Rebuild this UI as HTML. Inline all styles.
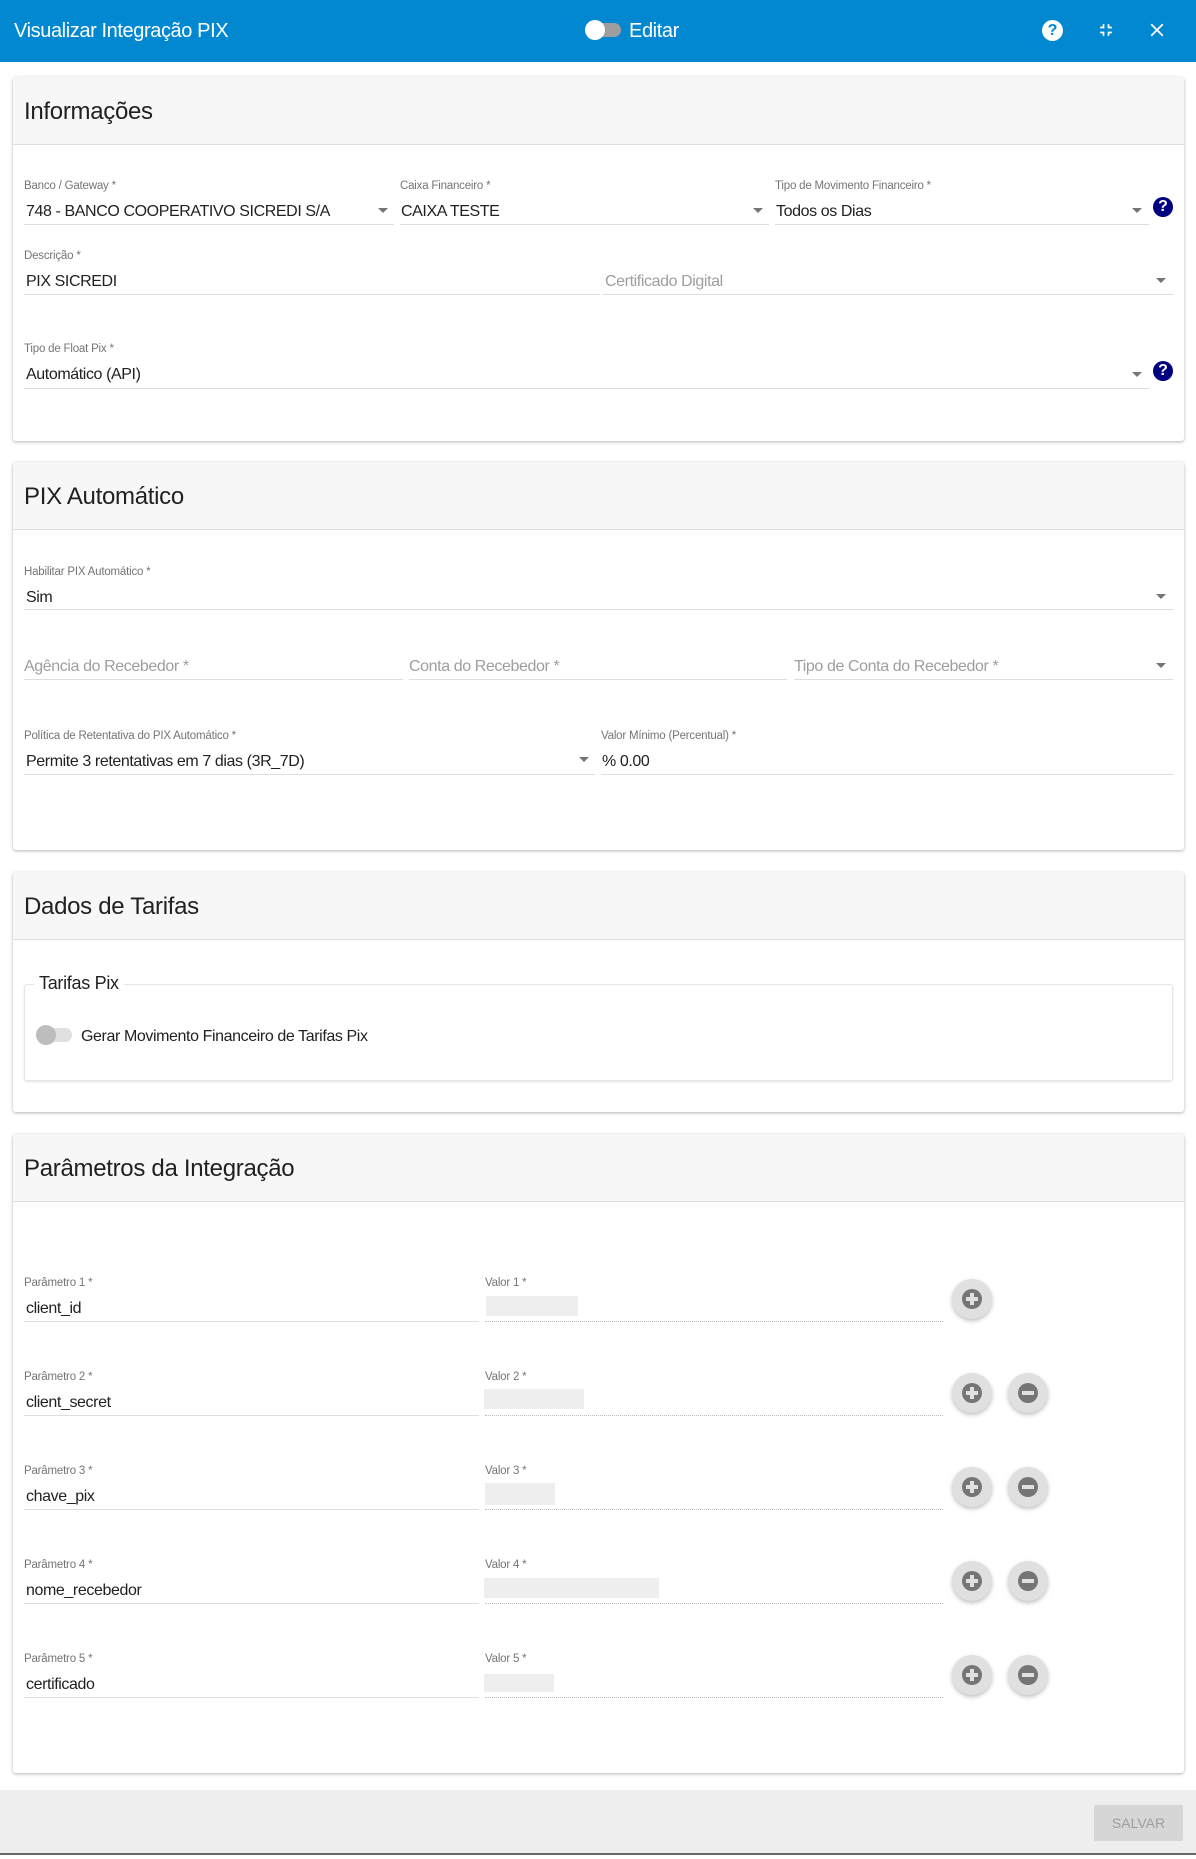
<!DOCTYPE html>
<html><head><meta charset="utf-8"><style>
*{box-sizing:border-box;margin:0;padding:0}
body{width:1196px;height:1859px;position:relative;background:#fff;font-family:"Liberation Sans",sans-serif;color:#212121;overflow:hidden}
.a{position:absolute}
.hdr{left:0;top:0;width:1196px;height:62px;background:#0288d1;color:#fff}
.card{left:13px;width:1171px;background:#fff;border-radius:3px;box-shadow:0 1px 3px rgba(0,0,0,.3)}
.ch{left:0;top:0;width:100%;height:68px;background:#f7f7f7;border-bottom:1px solid #ddd;font-size:24px;padding:21px 0 0 11px;border-radius:3px 3px 0 0;letter-spacing:-0.3px}
.lbl{font-size:11.5px;color:#757575;margin-top:2px;letter-spacing:-0.2px}
.val{font-size:16px;margin-top:2px;letter-spacing:-0.4px}
.ph{font-size:16px;color:#9e9e9e;margin-top:2px;letter-spacing:-0.4px}
.ln{height:1px;background:#ddd}
.dl{height:0;border-top:1px dotted #bbb}
.car{width:0;height:0;border-left:5px solid transparent;border-right:5px solid transparent;border-top:5px solid #757575}
.q{width:20px;height:20px;border-radius:50%;background:#000080;color:#fff;font-weight:bold;font-size:16px;text-align:center;line-height:20px}
.btn{width:40px;height:40px;border-radius:50%;background:#e0e0e0;box-shadow:0 2px 4px rgba(0,0,0,.25)}
.btn i{position:absolute;left:10px;top:10px;width:20px;height:20px;border-radius:50%;background:#757575}
.btn b{position:absolute;background:#e0e0e0}
.blur{background:#eee}
</style></head><body>
<div class="a hdr">
<div class="a" style="left:14px;top:20px;font-size:20px;letter-spacing:-0.4px">Visualizar Integração PIX</div>
<div class="a" style="left:587px;top:23px;width:34px;height:14px;border-radius:7px;background:#9e9e9e"></div>
<div class="a" style="left:585px;top:20px;width:20px;height:20px;border-radius:50%;background:#fff"></div>
<div class="a" style="left:629px;top:20px;font-size:20px;letter-spacing:-0.4px">Editar</div>
<div class="a" style="left:1042px;top:20px;width:21px;height:21px;border-radius:50%;background:#fff;color:#0288d1;font-weight:bold;font-size:16px;text-align:center;line-height:21px">?</div>
<svg class="a" style="left:1096px;top:20px" width="20" height="20" viewBox="0 0 24 24"><path fill="#fff" d="M5 16h3v3h2v-5H5v2zm3-8H5v2h5V5H8v3zm6 11h2v-3h3v-2h-5v5zm2-11V5h-2v5h5V8h-3z"/></svg>
<svg class="a" style="left:1146px;top:19px" width="22" height="22" viewBox="0 0 24 24"><path fill="#fff" d="M19 6.41L17.59 5 12 10.59 6.41 5 5 6.41 10.59 12 5 17.590 6.41 19 12 13.41 17.59 19 19 17.59 13.41 12z"/></svg>
</div>

<div class="a card" style="top:77px;height:364px">
<div class="a ch">Informações</div>
</div>
<div class="a lbl" style="left:24px;top:178px">Banco / Gateway *</div>
<div class="a val" style="left:26px;top:201px">748 - BANCO COOPERATIVO SICREDI S/A</div>
<div class="a car" style="left:378px;top:208px"></div>
<div class="a ln" style="left:24px;top:224px;width:370px"></div>
<div class="a lbl" style="left:400px;top:178px">Caixa Financeiro *</div>
<div class="a val" style="left:401px;top:201px">CAIXA TESTE</div>
<div class="a car" style="left:753px;top:208px"></div>
<div class="a ln" style="left:400px;top:224px;width:369px"></div>
<div class="a lbl" style="left:775px;top:178px">Tipo de Movimento Financeiro *</div>
<div class="a val" style="left:776px;top:201px">Todos os Dias</div>
<div class="a car" style="left:1132px;top:208px"></div>
<div class="a ln" style="left:775px;top:224px;width:374px"></div>
<div class="a q" style="left:1153px;top:197px">?</div>

<div class="a lbl" style="left:24px;top:248px">Descrição *</div>
<div class="a val" style="left:26px;top:271px">PIX SICREDI</div>
<div class="a ln" style="left:24px;top:294px;width:576px"></div>
<div class="a ph" style="left:605px;top:271px">Certificado Digital</div>
<div class="a car" style="left:1156px;top:278px"></div>
<div class="a ln" style="left:603px;top:294px;width:570px"></div>

<div class="a lbl" style="left:24px;top:341px">Tipo de Float Pix *</div>
<div class="a val" style="left:26px;top:364px">Automático (API)</div>
<div class="a car" style="left:1132px;top:372px"></div>
<div class="a ln" style="left:24px;top:388px;width:1125px"></div>
<div class="a q" style="left:1153px;top:361px">?</div>

<div class="a card" style="top:462px;height:388px">
<div class="a ch">PIX Automático</div>
</div>
<div class="a lbl" style="left:24px;top:564px">Habilitar PIX Automático *</div>
<div class="a val" style="left:26px;top:587px">Sim</div>
<div class="a car" style="left:1156px;top:594px"></div>
<div class="a ln" style="left:24px;top:609px;width:1149px"></div>

<div class="a ph" style="left:24px;top:656px">Agência do Recebedor *</div>
<div class="a ln" style="left:24px;top:679px;width:379px"></div>
<div class="a ph" style="left:409px;top:656px">Conta do Recebedor *</div>
<div class="a ln" style="left:409px;top:679px;width:378px"></div>
<div class="a ph" style="left:794px;top:656px">Tipo de Conta do Recebedor *</div>
<div class="a car" style="left:1156px;top:663px"></div>
<div class="a ln" style="left:794px;top:679px;width:379px"></div>

<div class="a lbl" style="left:24px;top:728px">Política de Retentativa do PIX Automático *</div>
<div class="a val" style="left:26px;top:751px">Permite 3 retentativas em 7 dias (3R_7D)</div>
<div class="a car" style="left:579px;top:757px"></div>
<div class="a ln" style="left:24px;top:774px;width:571px"></div>
<div class="a lbl" style="left:601px;top:728px">Valor Mínimo (Percentual) *</div>
<div class="a val" style="left:602px;top:751px">% 0.00</div>
<div class="a ln" style="left:601px;top:774px;width:572px"></div>

<div class="a card" style="top:872px;height:240px">
<div class="a ch">Dados de Tarifas</div>
</div>
<div class="a" style="left:24px;top:984px;width:1149px;height:97px;border:1px solid #e6e6e6;border-radius:3px;box-shadow:0 1px 2px rgba(0,0,0,.12)"></div>
<div class="a" style="left:34px;top:973px;background:#fff;padding:0 5px;font-size:18px;letter-spacing:-0.3px">Tarifas Pix</div>
<div class="a" style="left:38px;top:1028px;width:34px;height:14px;border-radius:7px;background:#e0e0e0"></div>
<div class="a" style="left:36px;top:1025px;width:20px;height:20px;border-radius:50%;background:#bdbdbd"></div>
<div class="a val" style="left:81px;top:1026px">Gerar Movimento Financeiro de Tarifas Pix</div>

<div class="a card" style="top:1134px;height:639px">
<div class="a ch">Parâmetros da Integração</div>
</div>

<div class="a lbl" style="left:24px;top:1275px">Parâmetro 1 *</div>
<div class="a val" style="left:26px;top:1298px">client_id</div>
<div class="a ln" style="left:24px;top:1321px;width:455px"></div>
<div class="a lbl" style="left:485px;top:1275px">Valor 1 *</div>
<div class="a blur" style="left:486px;top:1296px;width:92px;height:20px"></div>
<div class="a dl" style="left:485px;top:1321px;width:458px"></div>
<div class="a btn" style="left:952px;top:1279px"><i></i><b style="left:18px;top:14px;width:4px;height:12px"></b><b style="left:14px;top:18px;width:12px;height:4px"></b></div>

<div class="a lbl" style="left:24px;top:1369px">Parâmetro 2 *</div>
<div class="a val" style="left:26px;top:1392px">client_secret</div>
<div class="a ln" style="left:24px;top:1415px;width:455px"></div>
<div class="a lbl" style="left:485px;top:1369px">Valor 2 *</div>
<div class="a blur" style="left:484px;top:1389px;width:100px;height:20px"></div>
<div class="a dl" style="left:485px;top:1415px;width:458px"></div>
<div class="a btn" style="left:952px;top:1373px"><i></i><b style="left:18px;top:14px;width:4px;height:12px"></b><b style="left:14px;top:18px;width:12px;height:4px"></b></div>
<div class="a btn" style="left:1008px;top:1373px"><i></i><b style="left:14px;top:18px;width:12px;height:4px"></b></div>

<div class="a lbl" style="left:24px;top:1463px">Parâmetro 3 *</div>
<div class="a val" style="left:26px;top:1486px">chave_pix</div>
<div class="a ln" style="left:24px;top:1509px;width:455px"></div>
<div class="a lbl" style="left:485px;top:1463px">Valor 3 *</div>
<div class="a blur" style="left:485px;top:1483px;width:70px;height:22px"></div>
<div class="a dl" style="left:485px;top:1509px;width:458px"></div>
<div class="a btn" style="left:952px;top:1467px"><i></i><b style="left:18px;top:14px;width:4px;height:12px"></b><b style="left:14px;top:18px;width:12px;height:4px"></b></div>
<div class="a btn" style="left:1008px;top:1467px"><i></i><b style="left:14px;top:18px;width:12px;height:4px"></b></div>

<div class="a lbl" style="left:24px;top:1557px">Parâmetro 4 *</div>
<div class="a val" style="left:26px;top:1580px">nome_recebedor</div>
<div class="a ln" style="left:24px;top:1603px;width:455px"></div>
<div class="a lbl" style="left:485px;top:1557px">Valor 4 *</div>
<div class="a blur" style="left:484px;top:1578px;width:175px;height:20px"></div>
<div class="a dl" style="left:485px;top:1603px;width:458px"></div>
<div class="a btn" style="left:952px;top:1561px"><i></i><b style="left:18px;top:14px;width:4px;height:12px"></b><b style="left:14px;top:18px;width:12px;height:4px"></b></div>
<div class="a btn" style="left:1008px;top:1561px"><i></i><b style="left:14px;top:18px;width:12px;height:4px"></b></div>

<div class="a lbl" style="left:24px;top:1651px">Parâmetro 5 *</div>
<div class="a val" style="left:26px;top:1674px">certificado</div>
<div class="a ln" style="left:24px;top:1697px;width:455px"></div>
<div class="a lbl" style="left:485px;top:1651px">Valor 5 *</div>
<div class="a blur" style="left:484px;top:1674px;width:70px;height:18px"></div>
<div class="a dl" style="left:485px;top:1697px;width:458px"></div>
<div class="a btn" style="left:952px;top:1655px"><i></i><b style="left:18px;top:14px;width:4px;height:12px"></b><b style="left:14px;top:18px;width:12px;height:4px"></b></div>
<div class="a btn" style="left:1008px;top:1655px"><i></i><b style="left:14px;top:18px;width:12px;height:4px"></b></div>

<div class="a" style="left:0;top:1790px;width:1196px;height:65px;background:#eee;border-bottom:2px solid #666"></div>
<div class="a" style="left:1094px;top:1805px;width:89px;height:36px;background:#d6d6d6;border-radius:2px;color:#9e9e9e;font-size:14px;text-align:center;line-height:36px">SALVAR</div>
</body></html>
